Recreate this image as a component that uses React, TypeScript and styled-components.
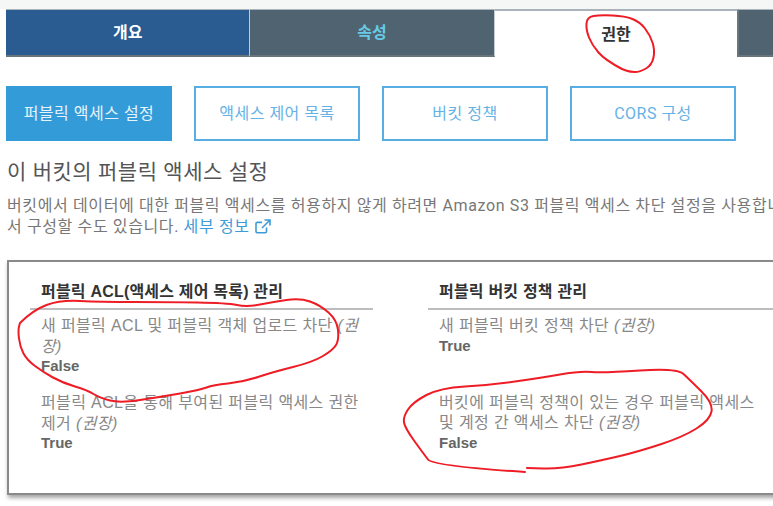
import React from 'react';
import styled, { createGlobalStyle } from 'styled-components';

const GlobalStyle = createGlobalStyle`
  html, body {
    margin: 0;
    padding: 0;
    background: #fff;
    overflow: hidden;
  }
`;

const Page = styled.div`
  position: relative;
  width: 773px;
  height: 506px;
  overflow: hidden;
  font-family: 'Liberation Sans', 'Noto Sans CJK KR', sans-serif;
`;

const TopStrip = styled.div`
  height: 9px;
  background: #f5f6f6;
`;

const TabBar = styled.div`
  display: flex;
  width: 1000px;
  height: 48px;
  padding-left: 6px;
  box-sizing: border-box;
  background: #fff;
`;

const Tab = styled.div<{ $kind: 'primary' | 'muted' | 'active' }>`
  width: 244.4px;
  height: 48px;
  flex-shrink: 0;
  box-sizing: border-box;
  display: flex;
  align-items: center;
  justify-content: center;
  padding-bottom: 3px;
  font-size: 16px;
  font-weight: 700;
  border-top: 1px solid #a9b4bb;
  border-right: 1px solid #c4ccd1;
  border-bottom: 2px solid #69757d;
  background: ${(p) => (p.$kind === 'primary' ? '#2a5b91' : p.$kind === 'muted' ? '#4f6470' : '#fff')};
  color: ${(p) => (p.$kind === 'primary' ? '#fff' : p.$kind === 'muted' ? '#67cbe6' : '#333')};
  ${(p) =>
    p.$kind === 'active' &&
    `
    border-top: 2px solid #aab3b9;
    border-right: 2px solid #69757d;
    border-bottom: none;
  `}
`;

const ButtonRow = styled.div`
  display: flex;
  gap: 22px;
  padding: 29px 0 0 6px;
`;

const SubTab = styled.div<{ $active?: boolean }>`
  width: 166px;
  height: 55px;
  box-sizing: border-box;
  display: flex;
  align-items: center;
  justify-content: center;
  padding-bottom: 3px;
  font-family: Roboto, 'Noto Sans CJK KR', sans-serif;
  font-size: 16px;
  letter-spacing: 0.5px;
  border: 2px solid ${(p) => (p.$active ? '#349bd9' : '#58ade3')};
  background: ${(p) => (p.$active ? '#349bd9' : '#fff')};
  color: ${(p) => (p.$active ? '#e6f3fb' : '#66b2e6')};
`;

const Title = styled.h2`
  margin: 18px 0 0 7px;
  font-family: Roboto, 'Noto Sans CJK KR', sans-serif;
  font-size: 21px;
  line-height: 27px;
  font-weight: 400;
  letter-spacing: 0.55px;
  color: #555;
`;

const Description = styled.p`
  margin: 9px 0 0 7px;
  width: 900px;
  font-family: Roboto, 'Noto Sans CJK KR', sans-serif;
  font-size: 16px;
  line-height: 21px;
  letter-spacing: 0.62px;
  color: #777;
`;

const InfoLink = styled.a`
  color: #3d9bd9;
  text-decoration: none;
  display: inline-flex;
  align-items: center;
  gap: 5px;
`;

const Panel = styled.div`
  margin: 23px 0 0 7px;
  width: 900px;
  height: 235px;
  box-sizing: border-box;
  border: 2px solid #8a8a8a;
  box-shadow: 1px 3px 4px rgba(0, 0, 0, 0.35);
  display: flex;
  padding-top: 20px;
`;

const Column = styled.div`
  width: 343px;
  margin-left: 21px;
  flex-shrink: 0;

  & + & {
    width: 400px;
    margin-left: 55px;
  }
`;

const ColumnTitle = styled.h3`
  margin: 0;
  padding: 0 0 7px 11px;
  height: 19px;
  font-size: 16px;
  line-height: 20px;
  font-weight: 700;
  letter-spacing: 0.2px;
  color: #333;
  border-bottom: 2px solid #bdbdbd;
`;

const Setting = styled.div<{ $gap?: number }>`
  margin: ${(p) => p.$gap ?? 0}px 0 0 11px;
  width: 323px;
  font-size: 16px;
  line-height: 20.5px;
  letter-spacing: 0.37px;
  color: #888;

  em {
    font-style: italic;
  }
`;

const Value = styled.div`
  margin-top: -1px;
  font-size: 15px;
  line-height: 20px;
  font-weight: 700;
  letter-spacing: 0;
  color: #666;
`;

const Scribbles = styled.svg`
  position: absolute;
  inset: 0;
  pointer-events: none;
`;

type Pt = [number, number];

// smooth the hand drawn marks through the midpoints
const smooth = (pts: Pt[]) => {
  let d = `M${pts[0][0]} ${pts[0][1]}`;
  for (let i = 1; i < pts.length - 1; i++) {
    const mx = (pts[i][0] + pts[i + 1][0]) / 2;
    const my = (pts[i][1] + pts[i + 1][1]) / 2;
    d += ` Q${pts[i][0]} ${pts[i][1]} ${mx} ${my}`;
  }
  const last = pts[pts.length - 1];
  return `${d} L${last[0]} ${last[1]}`;
};

const MARKS: Pt[][] = [
  [[622, 69], [605, 60], [592, 45], [586, 30], [587, 17], [600, 15], [625, 16], [640, 22], [650, 35], [655, 50], [652, 65], [640, 72], [630, 72], [622, 69]],
  [[20, 323], [33, 310], [60, 300], [100, 302], [167, 302], [227, 303], [247, 307], [273, 302], [300, 298], [320, 305], [337, 320], [339, 340], [333, 350], [313, 362], [273, 372], [243, 382], [213, 385], [200, 390], [160, 397], [120, 403], [100, 398], [87, 390], [63, 383], [43, 372], [27, 360], [20, 347], [18, 330], [20, 323]],
  [[525, 472], [433, 466], [423, 453], [405, 428], [403, 417], [413, 402], [440, 388], [490, 385], [540, 378], [580, 371], [603, 373], [677, 368], [690, 380], [713, 403], [710, 420], [683, 437], [637, 452], [603, 460], [560, 469], [527, 468]],
];

const ExternalIcon = () => (
  <svg width="16" height="15" viewBox="0 0 16 15" fill="none" stroke="#3d9bd9" strokeWidth="1.6">
    <path d="M11.5 8.5v4a1.2 1.2 0 0 1-1.2 1.2H2.2A1.2 1.2 0 0 1 1 12.5V4.6a1.2 1.2 0 0 1 1.2-1.2H7" />
    <path d="M9.5 1h5.5v5.5M15 1L7 9" />
  </svg>
);

const Recommended = () => <em>(권장)</em>;

export default function App() {
  return (
    <Page>
      <GlobalStyle />
      <TopStrip />
      <TabBar>
        <Tab $kind="primary">개요</Tab>
        <Tab $kind="muted">속성</Tab>
        <Tab $kind="active">권한</Tab>
        <Tab $kind="muted" />
      </TabBar>
      <ButtonRow>
        <SubTab $active>퍼블릭 액세스 설정</SubTab>
        <SubTab>액세스 제어 목록</SubTab>
        <SubTab>버킷 정책</SubTab>
        <SubTab>CORS 구성</SubTab>
      </ButtonRow>
      <Title>이 버킷의 퍼블릭 액세스 설정</Title>
      <Description>
        버킷에서 데이터에 대한 퍼블릭 액세스를 허용하지 않게 하려면 Amazon S3 퍼블릭 액세스 차단 설정을 사용합니다.
        <br />
        서 구성할 수도 있습니다. <InfoLink>세부 정보 <ExternalIcon /></InfoLink>
      </Description>
      <Panel>
        <Column>
          <ColumnTitle>퍼블릭 ACL(액세스 제어 목록) 관리</ColumnTitle>
          <Setting $gap={6}>
            새 퍼블릭 ACL 및 퍼블릭 객체 업로드 차단 <Recommended />
            <Value>False</Value>
          </Setting>
          <Setting $gap={17}>
            퍼블릭 ACL을 통해 부여된 퍼블릭 액세스 권한 제거 <Recommended />
            <Value>True</Value>
          </Setting>
        </Column>
        <Column>
          <ColumnTitle>퍼블릭 버킷 정책 관리</ColumnTitle>
          <Setting $gap={6}>
            새 퍼블릭 버킷 정책 차단 <Recommended />
            <Value>True</Value>
          </Setting>
          <Setting $gap={37}>
            버킷에 퍼블릭 정책이 있는 경우 퍼블릭 액세스 및 계정 간 액세스 차단 <Recommended />
            <Value>False</Value>
          </Setting>
        </Column>
      </Panel>
      <Scribbles width="773" height="506" viewBox="0 0 773 506" fill="none" stroke="#ee1c25" strokeWidth="2" strokeLinecap="round">
        {MARKS.map((pts, i) => (
          <path key={i} d={smooth(pts)} />
        ))}
      </Scribbles>
    </Page>
  );
}
